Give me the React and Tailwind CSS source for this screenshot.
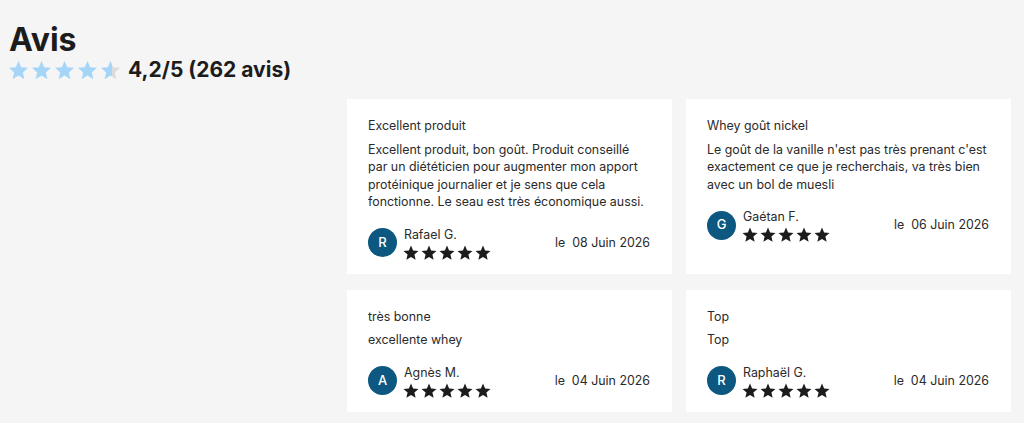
import React from 'react';

const STAR = 'M12 17.27L18.18 21l-1.64-7.03L22 9.24l-7.19-.61L12 2 9.19 8.63 2 9.24l5.46 4.73L5.82 21z';

const Star = ({ className, fill = 'currentColor' }) => (
  <svg viewBox="0 0 24 24" className={className}>
    <path d={STAR} fill={fill} />
  </svg>
);

const PartStar = ({ className }) => (
  <svg viewBox="0 0 24 24" className={className}>
    <defs>
      <linearGradient id="part">
        <stop offset="58%" stopColor="#a5d6f7" />
        <stop offset="58%" stopColor="#dcdcdc" />
      </linearGradient>
    </defs>
    <path d={STAR} fill="url(#part)" />
  </svg>
);

const reviews = [
  {
    title: 'Excellent produit',
    body: 'Excellent produit, bon goût. Produit conseillé par un diététicien pour augmenter mon apport protéinique journalier et je sens que cela fonctionne. Le seau est très économique aussi.',
    name: 'Rafael G.',
    date: '08 Juin 2026',
  },
  {
    title: 'Whey goût nickel',
    body: "Le goût de la vanille n'est pas très prenant c'est exactement ce que je recherchais, va très bien avec un bol de muesli",
    name: 'Gaétan F.',
    date: '06 Juin 2026',
  },
  { title: 'très bonne', body: 'excellente whey', name: 'Agnès M.', date: '04 Juin 2026' },
  { title: 'Top', body: 'Top', name: 'Raphaël G.', date: '04 Juin 2026' },
];

const ReviewCard = ({ review }) => (
  <div className="bg-white pt-[18px] pb-[12px] pl-[21px] pr-[22px] text-[12.4px] leading-[17.5px] text-[#2a2a2a]">
    <p>{review.title}</p>
    <p className="mt-[6px]">{review.body}</p>
    <div className="mt-[13px] flex items-center justify-between">
      <div className="flex items-center gap-[7px]">
        <div className="flex h-[29px] w-[29px] items-center justify-center rounded-full bg-[#0c5880] text-[13px] font-medium text-white">
          {review.name[0]}
        </div>
        <div className="mt-[2px]">
          <p className="leading-[18px]">{review.name}</p>
          <div className="-ml-[2px] flex text-[#1c1c1c]">
            {[0, 1, 2, 3, 4].map((i) => (
              <Star key={i} className="h-[18px] w-[18px]" />
            ))}
          </div>
        </div>
      </div>
      <p className="whitespace-pre">{'le  ' + review.date}</p>
    </div>
  </div>
);

export default function App() {
  return (
    <div className="min-h-[423px] bg-[#f5f5f5] pt-[22px] pl-[9px] pr-[13px]" style={{ fontFamily: 'Inter, "Noto Sans", sans-serif' }}>
      <h1 className="text-[32px] font-bold leading-[36px] text-[#1c1c1c]">Avis</h1>
      <div className="-ml-[2px] flex items-center gap-[6px]">
        <div className="flex text-[#a5d6f7]">
          {[0, 1, 2, 3].map((i) => (
            <Star key={i} className="h-[23px] w-[23px]" />
          ))}
          <PartStar className="h-[23px] w-[23px]" />
        </div>
        <p className="text-[21px] font-bold leading-[24px] text-[#1c1c1c]">4,2/5 (262 avis)</p>
      </div>
      <div className="ml-auto mt-[17px] grid w-[664px] grid-cols-2 gap-x-[14px] gap-y-[16px]">
        {reviews.map((r, i) => (
          <ReviewCard key={i} review={r} />
        ))}
      </div>
    </div>
  );
}
